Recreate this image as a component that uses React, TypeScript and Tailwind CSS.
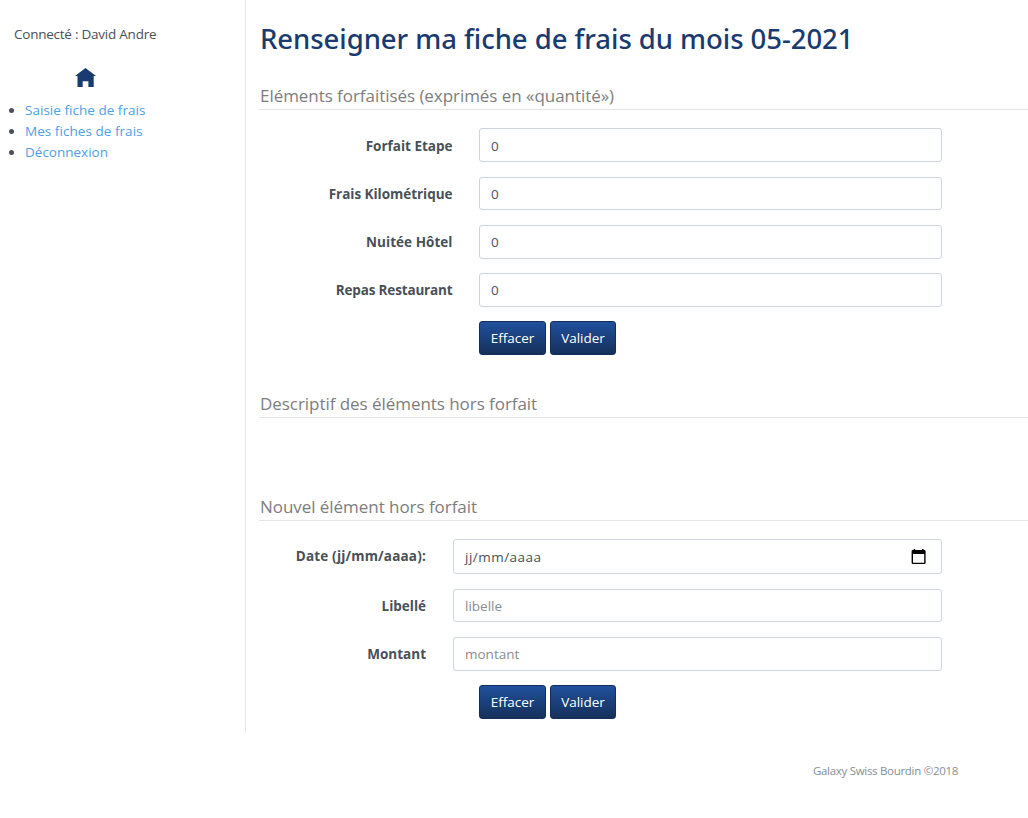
import type { ReactNode } from "react";

function SectionTitle({ children, className }: { children: ReactNode; className: string }) {
  return (
    <h2 className={`h-[27px] border-b border-[#e5e5e5] pl-px whitespace-nowrap text-[17px] leading-[25px] tracking-[-0.05px] text-[#7d7d7d] ${className}`}>
      <span>{children}</span>
    </h2>
  );
}

const fieldClass =
  "block rounded-[3px] border border-[#ced4da] bg-white px-[11px] text-[13.5px] text-[#495057] outline-none placeholder:text-[#868e96]";

function Label({ text, htmlFor, className }: { text: string; htmlFor: string; className: string }) {
  return (
    <label htmlFor={htmlFor} className={`shrink-0 whitespace-nowrap text-right text-[13.5px] leading-[20px] font-bold text-[#495057] ${className}`}>
      {text}
    </label>
  );
}

function Actions() {
  const base =
    "h-[34px] rounded-[3px] border border-[#142e59] bg-linear-to-b from-[#20509e] via-[#193d75] via-60% to-[#15305b] text-center text-[13.5px] leading-[20px] text-white";
  return (
    <div className="ml-[220px] flex gap-1">
      <button type="button" className={`${base} w-[67px]`}>Effacer</button>
      <button type="button" className={`${base} w-[66px]`}>Valider</button>
    </div>
  );
}

const packages = [
  { id: "etp", label: "Forfait Etape", tracking: "tracking-normal pt-[2px]", row: "mb-[15px]", height: "h-[34px] pt-px" },
  { id: "km", label: "Frais Kilométrique", tracking: "tracking-[-0.03px] pt-px", row: "mb-[15px]", height: "h-[33px]" },
  { id: "nui", label: "Nuitée Hôtel", tracking: "tracking-[0.04px]", row: "mb-[14px]", height: "h-[34px]" },
  { id: "rep", label: "Repas Restaurant", tracking: "tracking-[-0.16px]", row: "mb-[14px]", height: "h-[34px]" },
];

export default function App() {
  return (
    <div className="h-[818px] w-full overflow-hidden bg-white font-['Open_Sans',sans-serif] text-[13.5px] text-[#495057]">
      <div className="flex h-[733px]">
        <aside className="w-[246px] shrink-0 border-r border-[#e5e5e5]">
          <p className="mt-[24px] ml-[14px] h-[20px] leading-[20px] whitespace-nowrap">
            <span className="tracking-[-0.24px]">Connecté : David Andre</span>
          </p>
          <a href="#" aria-label="Accueil" className="mt-[23px] ml-[75px] block w-[21px]">
            <svg width="21" height="21" viewBox="0 0 21 21" fill="#193b70">
              <path d="M10.5 1 21 9.1H18.7V20H13.4V14.2H7.7V20H2.5V9.1H0Z" />
            </svg>
          </a>
          <ul className="mt-[12px] list-disc pl-[25px] leading-[21px] whitespace-nowrap text-[#495057]">
            <li><a href="#" className="tracking-[0.03px] text-[#4da1e4]">Saisie fiche de frais</a></li>
            <li><a href="#" className="tracking-[0.05px] text-[#4da1e4]">Mes fiches de frais</a></li>
            <li><a href="#" className="text-[#4da1e4]">Déconnexion</a></li>
          </ul>
        </aside>
        <main className="min-w-0 flex-1 pl-[13px]">
          <h1 className="mt-[22px] h-[34px] pl-px text-[27.5px] leading-[34px] font-medium whitespace-nowrap text-[#193b70] font-['Noto_Sans','Open_Sans',sans-serif]">
            <span className="tracking-[-0.05px]">Renseigner ma fiche de frais du mois 05-2021</span>
          </h1>
          <SectionTitle className="mt-[27px]">Eléments forfaitisés (exprimés en «quantité»)</SectionTitle>
          <form className="mt-[18px]">
            {packages.map((p) => (
              <div key={p.id} className={`flex items-center ${p.row}`}>
                <Label text={p.label} htmlFor={p.id} className={`mr-[26.5px] w-[193.5px] ${p.tracking}`} />
                <input id={p.id} type="text" defaultValue="0" className={`${fieldClass} w-[463px] ${p.height}`} />
              </div>
            ))}
            <Actions />
          </form>
          <SectionTitle className="mt-[36px]">Descriptif des éléments hors forfait</SectionTitle>
          <SectionTitle className="mt-[76px]">Nouvel élément hors forfait</SectionTitle>
          <form className="mt-[18px]">
            <div className="mb-[15px] flex items-center">
              <Label text="Date (jj/mm/aaaa):" htmlFor="date" className="mr-[27px] w-[167px] pb-[2px] tracking-[0.18px]" />
              <div className={`${fieldClass} flex! h-[35px] w-[489px] items-center justify-between`}>
                <span id="date" className="pt-[2px] tracking-[0.48px]">jj/mm/aaaa</span>
                <svg width="16" height="18" viewBox="0 0 16 18" className="mr-[3px]">
                  <path d="M2.6 1h1.6v2H2.6zM11 1h1.6v2H11z" fill="#000" />
                  <path d="M.6 3.2Q.6 2 1.8 2H13.4Q14.6 2 14.6 3.2V14.8Q14.6 16 13.4 16H1.8Q.6 16 .6 14.8ZM2 6V14.7H13.2V6Z" fill="#000" fillRule="evenodd" />
                </svg>
              </div>
            </div>
            <div className="mb-[15px] flex items-center">
              <Label text="Libellé" htmlFor="libelle" className="mr-[27px] w-[167px]" />
              <input id="libelle" placeholder="libelle" className={`${fieldClass} h-[33px] w-[489px]`} />
            </div>
            <div className="mb-[14px] flex items-center">
              <Label text="Montant" htmlFor="montant" className="mr-[27px] w-[167px]" />
              <input id="montant" placeholder="montant" className={`${fieldClass} h-[34px] w-[489px]`} />
            </div>
            <Actions />
          </form>
        </main>
      </div>
      <footer className="mt-[29px] flex justify-end pr-[70px] text-[11.5px] leading-[18px] text-[#868e96]">
        <span className="tracking-[-0.3px] whitespace-nowrap">Galaxy Swiss Bourdin ©2018</span>
      </footer>
    </div>
  );
}
